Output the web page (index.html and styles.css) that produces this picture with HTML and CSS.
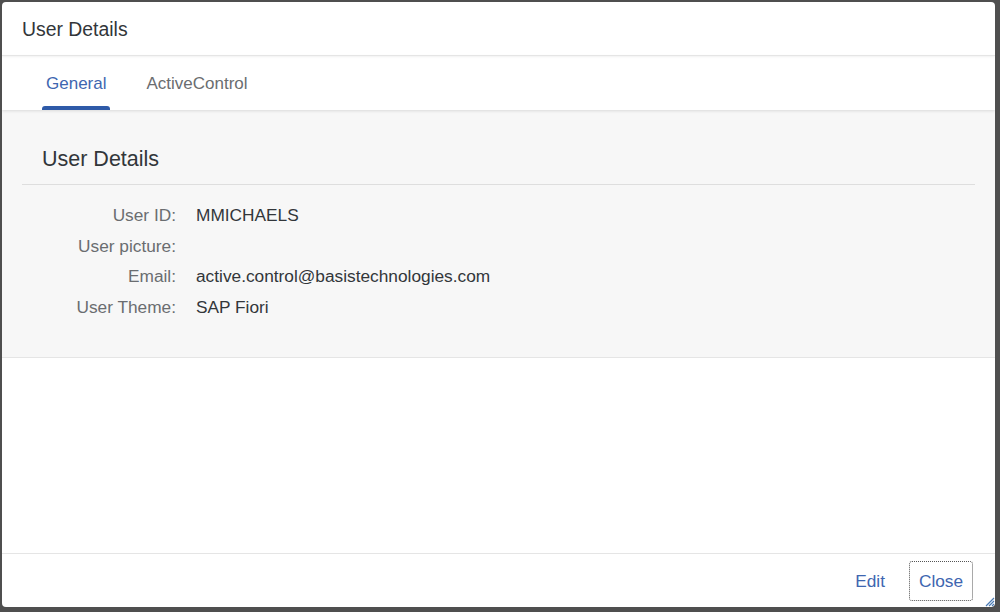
FILE: index.html
```html
<!DOCTYPE html>
<html>
<head>
<meta charset="utf-8">
<link rel="stylesheet" href="styles.css">
</head>
<body>
<div class="dialog">
  <header class="dlg-header"><h1 class="dlg-title">User Details</h1></header>
  <nav class="tabs">
    <div class="tab tab-active">General</div>
    <div class="tab">ActiveControl</div>
  </nav>
  <section class="content">
    <div class="section-title">User Details</div>
    <div class="form">
      <div class="label">User ID:</div><div class="value">MMICHAELS</div>
      <div class="label">User picture:</div><div class="value"></div>
      <div class="label">Email:</div><div class="value">active.control@basistechnologies.com</div>
      <div class="label">User Theme:</div><div class="value">SAP Fiori</div>
    </div>
  </section>
  <div class="spacer"></div>
  <footer class="dlg-footer">
    <button class="btn">Edit</button>
    <button class="btn btn-focus">Close</button>
    <svg class="resize" width="12" height="12" viewBox="0 0 12 12">
      <path d="M11 3 L3 11 M11 6 L6 11 M11 9 L9 11" stroke="#4a7bb5" stroke-width="1.2" fill="none"/>
    </svg>
  </footer>
</div>
</body>
</html>
```
FILE: styles.css
```css
* { box-sizing: border-box; }
html, body { margin: 0; }
body {
  width: 1000px;
  height: 612px;
  background: #4f4f4f;
  padding: 2px 5px 5px 2px;
  font-family: "Liberation Sans", Arial, sans-serif;
  color: #32363a;
  overflow: hidden;
}
.dialog {
  height: 100%;
  background: #fff;
  border-radius: 4px;
  display: flex;
  flex-direction: column;
  overflow: hidden;
}
.dlg-header {
  height: 54px;
  flex: none;
  display: flex;
  align-items: center;
  padding: 0 20px;
  border-bottom: 1px solid #e5e5e5;
  box-shadow: 0 1px 2px rgba(0,0,0,0.06);
  position: relative;
  z-index: 2;
}
.dlg-title {
  margin: 0;
  font-size: 19.4px;
  font-weight: normal;
  color: #32363a;
  padding-top: 1px;
}
.tabs {
  height: 54px;
  flex: none;
  display: flex;
  padding-left: 40px;
  gap: 32px;
  background: #fff;
  box-shadow: 0 1px 3px rgba(0,0,0,0.12);
  position: relative;
  z-index: 1;
}
.tab {
  font-size: 17px;
  color: #6a6d70;
  display: flex;
  align-items: center;
  padding: 2px 4px 0;
  position: relative;
}
.tab-active { color: #3e66b0; }
.tab-active::after {
  content: "";
  position: absolute;
  left: 0;
  right: 0;
  bottom: 0;
  height: 4px;
  border-radius: 3px 3px 0 0;
  background: #2e5aa8;
}
.content {
  flex: none;
  background: #f7f7f7;
  padding: 30px 20px 34px;
  border-bottom: 1px solid #e5e5e5;
}
.section-title {
  font-size: 21.5px;
  color: #32363a;
  padding: 7px 20px 0;
  height: 45px;
  border-bottom: 1px solid #dedede;
}
.form {
  display: grid;
  grid-template-columns: 154px 1fr;
  column-gap: 20px;
  padding-top: 15px;
}
.label, .value {
  height: 30.7px;
  display: flex;
  align-items: center;
  font-size: 17.3px;
}
.label { justify-content: flex-end; color: #6a6d70; }
.value { color: #32363a; }
.spacer { flex: 1; }
.dlg-footer {
  height: 54px;
  flex: none;
  border-top: 1px solid #e5e5e5;
  display: flex;
  align-items: center;
  justify-content: flex-end;
  padding: 0 22px 0 0;
  position: relative;
}
.btn {
  font-family: "Liberation Sans", Arial, sans-serif;
  font-size: 17.3px;
  color: #3e66b0;
  background: transparent;
  border: 1px solid transparent;
  height: 40px;
  padding: 0 8px;
  border-radius: 3px;
  margin-top: 1px;
}
.btn-focus {
  border: 1px dotted #555;
  width: 64px;
  margin-left: 15px;
}
.resize {
  position: absolute;
  right: 0;
  bottom: 0;
}
```
